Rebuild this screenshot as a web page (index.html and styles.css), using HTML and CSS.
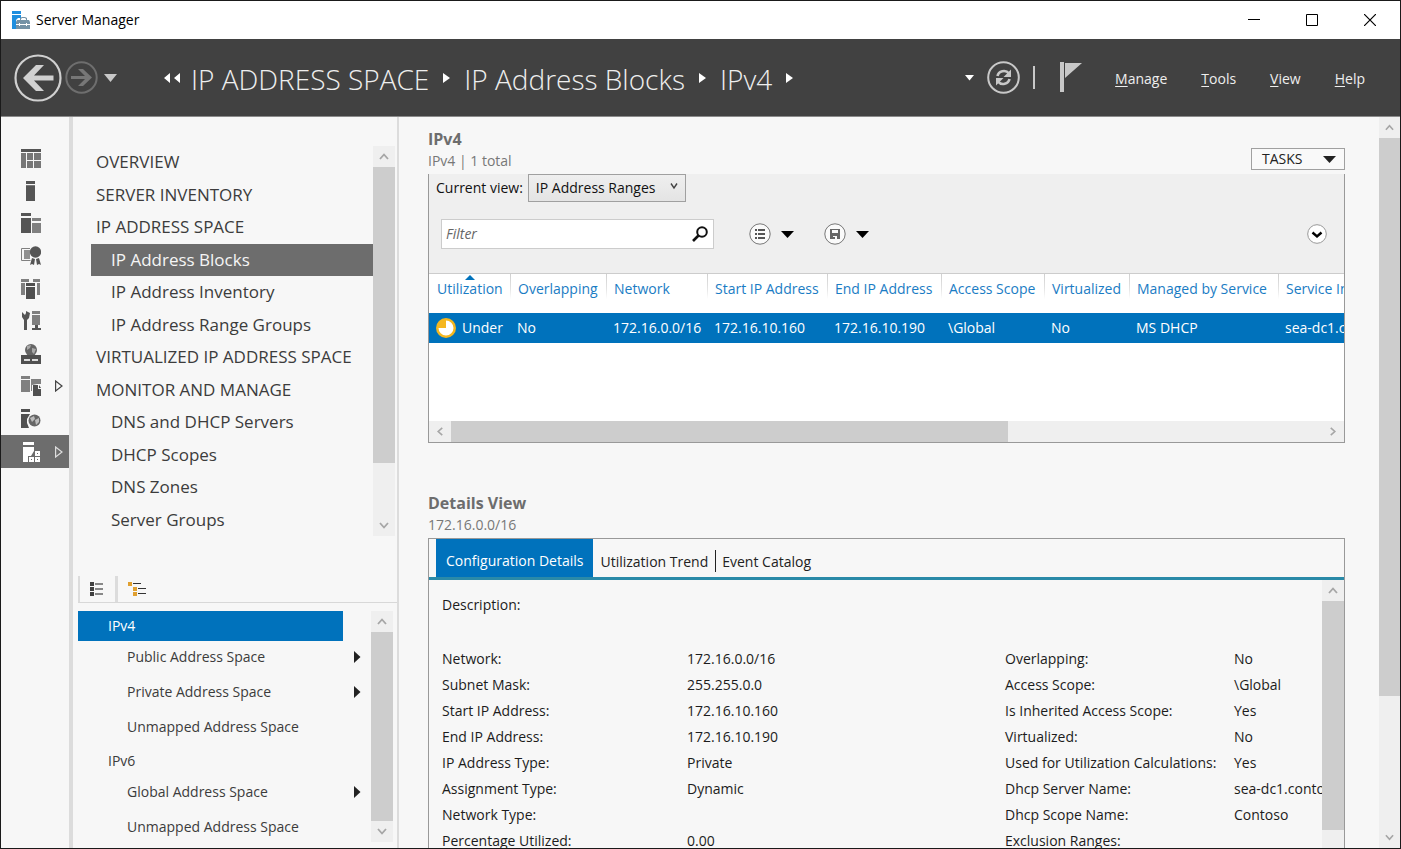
FILE: index.html
```html
<!DOCTYPE html>
<html lang="en">
<head>
<meta charset="utf-8">
<title>Server Manager</title>
<link rel="stylesheet" href="styles.css">
</head>
<body>
<div class="window">
  <header class="titlebar">
    <svg class="app-icon" width="18" height="18" viewBox="0 0 18 18" aria-hidden="true">
      <path fill="#1f8fdf" d="M0 0h9v3H0zM0 4h9v3H6L4 9v9H0z"/>
      <path fill="#7492a6" d="M4 11l1-2h3V7l2-1h3l2 1v2h2l1 2v2H4zM4 14h14v4H4z"/>
      <path fill="#fff" d="M9 8l1-1h3l1 1v1H9zM7 12h1v3H7zM14 12h1v3h-1z"/>
    </svg>
    <h1 class="app-title">Server Manager</h1>
    <div class="window-controls">
      <button class="window-button" aria-label="Minimize"><svg width="12" height="12" viewBox="0 0 12 12"><path d="M0 5.500h12" stroke="#000"/></svg></button>
      <button class="window-button" aria-label="Maximize"><svg width="12" height="12" viewBox="0 0 12 12"><path d="M.5.500h11v11H.5z" fill="none" stroke="#000"/></svg></button>
      <button class="window-button" aria-label="Close"><svg width="12" height="12" viewBox="0 0 12 12"><path d="M0 0l12 12M12 0L0 12" stroke="#000" stroke-width="1.200"/></svg></button>
    </div>
  </header>

  <div class="banner">
    <div class="history">
      <button class="plain" aria-label="Back"><svg width="48" height="48" viewBox="0 0 48 48"><circle cx="24" cy="24" r="22.500" fill="none" stroke="#d0d0d0" stroke-width="2.200"/><path fill="#d0d0d0" d="M9 24l13-13h8L20 21.500h19.500v5H20L30 37h-8z"/></svg></button>
      <button class="plain" aria-label="Forward"><svg width="33" height="33" viewBox="0 0 33 33"><circle cx="16.500" cy="16.500" r="15.200" fill="none" stroke="#6e6e6e" stroke-width="2"/><path fill="#777" d="M27 16.500L18 8h-5l7 7H6v3h14l-7 7h5z"/></svg></button>
      <button class="plain history-menu" aria-label="History"><svg width="13" height="8" viewBox="0 0 13 8"><path fill="#c8c8c8" d="M0 0h13L6.500 8z"/></svg></button>
    </div>
    <nav class="crumbs" aria-label="Breadcrumb">
      <svg width="17" height="10" viewBox="0 0 17 10"><path fill="#fff" d="M6 0v10L0 5zM16 0v10l-6-5z"/></svg>
      <a class="crumb" href="#">IP ADDRESS SPACE</a>
      <svg width="7" height="10" viewBox="0 0 7 10"><path fill="#fff" d="M0 0l7 5-7 5z"/></svg>
      <a class="crumb" href="#">IP Address Blocks</a>
      <svg width="7" height="10" viewBox="0 0 7 10"><path fill="#fff" d="M0 0l7 5-7 5z"/></svg>
      <a class="crumb" href="#">IPv4</a>
      <svg width="7" height="10" viewBox="0 0 7 10"><path fill="#fff" d="M0 0l7 5-7 5z"/></svg>
    </nav>
    <div class="banner-tools">
      <button class="plain" aria-label="More locations"><svg width="9" height="6" viewBox="0 0 9 6"><path fill="#fff" d="M0 0h9L4.500 5.500z"/></svg></button>
      <button class="plain" aria-label="Refresh"><svg width="33" height="33" viewBox="0 0 33 33"><circle cx="16.500" cy="16.500" r="15.300" fill="none" stroke="#c8c8c8" stroke-width="2"/><g fill="none" stroke="#c8c8c8" stroke-width="2.600"><path d="M10.500 15c1-5 8-7 11.500-2.500"/><path d="M22.500 18c-1 5-8 7-11.500 2.500"/></g><path fill="#c8c8c8" d="M24 8.500v7.500h-7.500zM9 24.500V17h7.500z"/></svg></button>
      <span class="banner-rule"></span>
      <button class="plain flag" aria-label="Notifications"><svg width="22" height="31" viewBox="0 0 22 31"><path fill="#c8c8c8" d="M0 0h4v30H0zM5 1h17L5 16z"/></svg></button>
    </div>
    <nav class="menus" aria-label="Main menu">
      <button class="menu"><u>M</u>anage</button>
      <button class="menu"><u>T</u>ools</button>
      <button class="menu"><u>V</u>iew</button>
      <button class="menu"><u>H</u>elp</button>
    </nav>
  </div>

  <div class="body">
    <nav class="rail" aria-label="Roles">
      <a class="rail-item" href="#" aria-label="Dashboard"><svg width="20" height="20" viewBox="0 0 20 20"><path fill="#555" d="M0 1h20v3H0z"/><path fill="#777" d="M0 5h5v15H0zM6 5h6v7H6zM13 5h7v7h-7zM6 13h6v7H6zM13 13h7v7h-7z"/></svg></a>
      <a class="rail-item" href="#" aria-label="Local Server"><svg width="20" height="20" viewBox="0 0 20 20"><path fill="#555" d="M5 0h9v3H5zM5 5h9v15H5z"/><path fill="#777" d="M5 4h9v1H5z"/></svg></a>
      <a class="rail-item" href="#" aria-label="All Servers"><svg width="20" height="20" viewBox="0 0 20 20"><path fill="#555" d="M0 0h10v3H0zM0 5h10v15H0z"/><path fill="#808080" d="M11 5h9v3h-9zM11 10h9v10h-9z"/></svg></a>
      <a class="rail-item" href="#" aria-label="Certificate Services"><svg width="20" height="20" viewBox="0 0 20 20"><path fill="none" stroke="#808080" d="M9 2.500H.5v12h9"/><path fill="#909090" d="M3 4h6v9H3z"/><circle cx="14.500" cy="6" r="5.700" fill="#555"/><path fill="#555" d="M11 12l3 1-1 6-2-1-2 1zM18 12l-3 1 1 6 2-1 2 1z"/></svg></a>
      <a class="rail-item" href="#" aria-label="Server Group"><svg width="20" height="20" viewBox="0 0 20 20"><path fill="#808080" d="M0 0h8v3H0zM0 4h4v12H0zM12 0h7v3h-7zM16 4h3v12h-3z"/><path fill="#505050" d="M5 4h9v3H5zM5 8h9v12H5z"/></svg></a>
      <a class="rail-item" href="#" aria-label="DHCP Tools"><svg width="20" height="20" viewBox="0 0 20 20"><path fill="#555" d="M1 1l3 3 1-2V0l4 2-1 5-2 2v10H3V9L1 6zM11 17h9v2h-9zM14 14h3v4h-3z"/><path fill="#808080" d="M11 0h8v3h-8zM11 4h8v10h-8z"/></svg></a>
      <a class="rail-item" href="#" aria-label="DNS"><svg width="20" height="20" viewBox="0 0 20 20"><circle cx="10" cy="6" r="6" fill="#666"/><path fill="#aaa" d="M6 2l4-1-1 3-3 2zM11 4l4 1-2 5-2-2z"/><path fill="#505050" d="M0 11h20v9H0z"/><path fill="#ddd" d="M3 15h6v2H3zM11 15h6v2h-6z"/></svg></a>
      <a class="rail-item" href="#" aria-label="File Services"><svg width="20" height="20" viewBox="0 0 20 20"><path fill="#808080" d="M0 0h9v3H0zM0 4h9v12H0zM10 3h10v5h-4l-5 1v6h-1z"/><path fill="#505050" d="M12 9h5v4h3v7h-8zM18 9l2 3h-2z"/></svg><svg class="rail-more" width="8" height="12" viewBox="0 0 8 12"><path fill="none" stroke="#444" stroke-width="1.200" d="M.6 1l6.400 5-6.400 5z"/></svg></a>
      <a class="rail-item" href="#" aria-label="Web Services"><svg width="20" height="20" viewBox="0 0 20 20"><path fill="#505050" d="M0 0h9v3H0zM0 5h9L6 10v4l2 5H0z"/><circle cx="13.500" cy="11.500" r="6" fill="#666"/><path fill="#bbb" d="M9 9l4-2 1 3-3 3zM14 11l4-2v4l-3 3z"/></svg></a>
      <a class="rail-item rail-current" href="#" aria-label="IPAM" aria-current="page"><svg width="20" height="20" viewBox="0 0 20 20"><path fill="#fff" d="M2 0h11v3H2zM2 5h11v4l-3 5H7v6H2zM14 9h5v5h-5zM8 15h5v5H8zM14 15h5v5h-5z"/><path fill="#6d6d6d" d="M16 11h1v1h-1zM10 17h1v1h-1zM16 17h1v1h-1z"/></svg><svg class="rail-more" width="8" height="12" viewBox="0 0 8 12"><path fill="none" stroke="#ddd" stroke-width="1.200" d="M.6 1l6.400 5-6.400 5z"/></svg></a>
    </nav>

    <aside class="sidebar">
      <div class="pane">
        <nav class="sections" aria-label="IPAM">
          <a class="section" href="#">OVERVIEW</a>
          <a class="section" href="#">SERVER INVENTORY</a>
          <a class="section" href="#">IP ADDRESS SPACE</a>
          <a class="section sub current" href="#">IP Address Blocks</a>
          <a class="section sub" href="#">IP Address Inventory</a>
          <a class="section sub" href="#">IP Address Range Groups</a>
          <a class="section" href="#">VIRTUALIZED IP ADDRESS SPACE</a>
          <a class="section" href="#">MONITOR AND MANAGE</a>
          <a class="section sub" href="#">DNS and DHCP Servers</a>
          <a class="section sub" href="#">DHCP Scopes</a>
          <a class="section sub" href="#">DNS Zones</a>
          <a class="section sub" href="#">Server Groups</a>
        </nav>
        <div class="scrollbar">
          <svg class="arrow" width="10" height="8" viewBox="0 0 10 8"><path d="M1 6.500L5 2l4 4.500"/></svg>
          <div class="track"><div class="thumb nav-thumb"></div></div>
          <svg class="arrow" width="10" height="8" viewBox="0 0 10 8"><path d="M1 1.500L5 6l4-4.500"/></svg>
        </div>
      </div>
      <div class="view-tabs">
        <button class="view-tab view-tab-on" aria-label="List view"><svg width="14" height="15" viewBox="0 0 14 15"><path fill="#404040" d="M0 0h4v4H0zM0 5h4v4H0zM0 10h4v4H0z"/><path fill="#888" d="M5 1h8v2H5zM5 6h8v2H5zM5 11h8v2H5z"/></svg></button>
        <button class="view-tab" aria-label="Tree view"><svg width="19" height="15" viewBox="0 0 19 15"><path fill="#e0a030" d="M0 0h4v4H0zM5 5h4v4H5zM5 10h4v4H5z"/><path fill="#333" d="M5 1h8v1H5zM10 6h8v1h-8zM10 11h8v1h-8z"/></svg></button>
      </div>
      <div class="pane tree-pane">
        <div class="tree">
          <a class="tree-root tree-current" href="#">IPv4</a>
          <a class="tree-leaf" href="#">Public Address Space<svg width="7" height="12" viewBox="0 0 7 12"><path fill="#222" d="M0 0l6.500 6L0 12z"/></svg></a>
          <a class="tree-leaf" href="#">Private Address Space<svg width="7" height="12" viewBox="0 0 7 12"><path fill="#222" d="M0 0l6.500 6L0 12z"/></svg></a>
          <a class="tree-leaf" href="#">Unmapped Address Space</a>
          <a class="tree-root" href="#">IPv6</a>
          <a class="tree-leaf" href="#">Global Address Space<svg width="7" height="12" viewBox="0 0 7 12"><path fill="#222" d="M0 0l6.500 6L0 12z"/></svg></a>
          <a class="tree-leaf" href="#">Unmapped Address Space</a>
        </div>
        <div class="scrollbar">
          <svg class="arrow" width="10" height="8" viewBox="0 0 10 8"><path d="M1 6.500L5 2l4 4.500"/></svg>
          <div class="track"><div class="thumb"></div></div>
          <svg class="arrow" width="10" height="8" viewBox="0 0 10 8"><path d="M1 1.500L5 6l4-4.500"/></svg>
        </div>
      </div>
    </aside>

    <main class="content">
      <section class="block">
        <div class="block-head">
          <div>
            <h2 class="block-title">IPv4</h2>
            <p class="block-sub">IPv4 | 1 total</p>
          </div>
          <button class="tasks">TASKS<svg width="13" height="7" viewBox="0 0 13 7"><path fill="#222" d="M0 0h13L6.500 7z"/></svg></button>
        </div>
        <div class="panel grid-panel">
          <div class="view-row">
            <label for="view">Current view:</label>
            <div class="view-picker">
              <select id="view" class="view-select"><option>IP Address Ranges</option></select>
              <svg class="view-chevron" width="8" height="7" viewBox="0 0 8 7"><path fill="none" stroke="#444" stroke-width="1.400" d="M1 .500l3 4.500L7 .500"/></svg>
            </div>
          </div>
          <div class="filter-row">
            <div class="filter">
              <input class="filter-input" type="text" placeholder="Filter" aria-label="Filter">
              <svg width="17" height="17" viewBox="0 0 17 17"><circle cx="10" cy="6" r="4.800" fill="none" stroke="#111" stroke-width="2"/><path d="M6.500 9.500L1 15" stroke="#111" stroke-width="2.600"/></svg>
            </div>
            <button class="plain split" aria-label="Criteria"><svg width="22" height="22" viewBox="0 0 22 22"><circle cx="11" cy="11" r="10.200" fill="#fafafa" stroke="#777"/><path fill="#555" d="M6 6h2v2H6zM9 6h7v2H9zM6 10h2v2H6zM9 10h7v2H9zM6 14h2v2H6zM9 14h7v2H9z"/></svg><svg width="13" height="7" viewBox="0 0 13 7"><path d="M0 0h13L6.500 7z"/></svg></button>
            <button class="plain split" aria-label="Save query"><svg width="22" height="22" viewBox="0 0 22 22"><circle cx="11" cy="11" r="10.200" fill="#fafafa" stroke="#777"/><path fill="#666" d="M6 6h10v10H6z"/><path fill="#fafafa" d="M8 7h6v3H8zM9 13h4v3H9z"/><path fill="#666" d="M9 14h2v2H9z"/></svg><svg width="13" height="7" viewBox="0 0 13 7"><path d="M0 0h13L6.500 7z"/></svg></button>
            <button class="plain expand" aria-label="Expand filter"><svg width="20" height="20" viewBox="0 0 20 20"><circle cx="10" cy="10" r="9.300" fill="#fff" stroke="#999"/><path fill="none" stroke="#000" stroke-width="2.400" d="M5.500 8.500l4.500 4 4.500-4"/></svg></button>
          </div>
          <div class="table-wrap">
            <table class="ranges">
              <colgroup><col class="c1"><col class="c2"><col class="c3"><col class="c4"><col class="c5"><col class="c6"><col class="c7"><col class="c8"><col class="c9"></colgroup>
              <thead>
                <tr><th>Utilization<svg class="sort" width="10" height="5" viewBox="0 0 10 5"><path fill="#0072bc" d="M0 5l5-5 5 5z"/></svg></th><th>Overlapping</th><th>Network</th><th>Start IP Address</th><th>End IP Address</th><th>Access Scope</th><th>Virtualized</th><th>Managed by Service</th><th>Service Instance</th></tr>
              </thead>
              <tbody>
                <tr><td><span class="state"><svg width="20" height="20" viewBox="0 0 20 20"><circle cx="10" cy="10" r="10" fill="#f5b71f"/><path fill="#fff" d="M10 2.500A7.500 7.500 0 1 1 2.500 10H10z"/></svg>Under</span></td><td>No</td><td>172.16.0.0/16</td><td>172.16.10.160</td><td>172.16.10.190</td><td>\Global</td><td>No</td><td>MS DHCP</td><td>sea-dc1.contoso.com</td></tr>
              </tbody>
            </table>
          </div>
          <div class="scrollbar horizontal">
            <svg class="arrow" width="8" height="10" viewBox="0 0 8 10"><path d="M6.500 1L2 5l4.500 4"/></svg>
            <div class="track"><div class="thumb grid-thumb"></div></div>
            <svg class="arrow" width="8" height="10" viewBox="0 0 8 10"><path d="M1.500 1L6 5l-4.500 4"/></svg>
          </div>
        </div>
      </section>

      <section class="block details">
        <h2 class="block-title">Details View</h2>
        <p class="block-sub">172.16.0.0/16</p>
        <div class="panel details-panel">
          <div class="tabs">
            <button class="tab tab-on">Configuration Details</button>
            <button class="tab">Utilization Trend</button>
            <button class="tab tab-last">Event Catalog</button>
          </div>
          <div class="details-body">
            <div class="facts">
              <p class="description">Description:</p>
              <dl class="fact-list">
                <dt>Network:</dt><dd>172.16.0.0/16</dd><dt>Overlapping:</dt><dd>No</dd>
                <dt>Subnet Mask:</dt><dd>255.255.0.0</dd><dt>Access Scope:</dt><dd>\Global</dd>
                <dt>Start IP Address:</dt><dd>172.16.10.160</dd><dt>Is Inherited Access Scope:</dt><dd>Yes</dd>
                <dt>End IP Address:</dt><dd>172.16.10.190</dd><dt>Virtualized:</dt><dd>No</dd>
                <dt>IP Address Type:</dt><dd>Private</dd><dt>Used for Utilization Calculations:</dt><dd>Yes</dd>
                <dt>Assignment Type:</dt><dd>Dynamic</dd><dt>Dhcp Server Name:</dt><dd>sea-dc1.contoso.com</dd>
                <dt>Network Type:</dt><dd></dd><dt>Dhcp Scope Name:</dt><dd>Contoso</dd>
                <dt>Percentage Utilized:</dt><dd>0.00</dd><dt>Exclusion Ranges:</dt><dd></dd>
              </dl>
            </div>
            <div class="scrollbar">
              <svg class="arrow" width="10" height="8" viewBox="0 0 10 8"><path d="M1 6.500L5 2l4 4.500"/></svg>
              <div class="track"><div class="thumb details-thumb"></div></div>
            </div>
          </div>
        </div>
      </section>
    </main>
    <div class="scrollbar page-scroll">
      <svg class="arrow" width="10" height="8" viewBox="0 0 10 8"><path d="M1 6.500L5 2l4 4.500"/></svg>
      <div class="track"><div class="thumb page-thumb"></div></div>
      <svg class="arrow" width="10" height="8" viewBox="0 0 10 8"><path d="M1 1.500L5 6l4-4.500"/></svg>
    </div>
  </div>
</div>
</body>
</html>
```
FILE: styles.css
```css
* { box-sizing: border-box; }

body {
  margin: 0;
  font: 14px/20px "Open Sans", "Noto Sans", sans-serif;
  color: #222;
}

h1, h2, p, dl, dd { margin: 0; }
a { color: inherit; text-decoration: none; }
svg { display: block; flex: none; }
button, input, select { font: inherit; color: inherit; }

.plain {
  display: flex;
  align-items: center;
  padding: 0;
  border: 0;
  background: none;
}

.window {
  display: flex;
  flex-direction: column;
  height: 100vh;
  overflow: hidden;
  border: 1px solid #1a1a1a;
  background: #f7f7f7;
}

/* Title bar */
.titlebar {
  display: flex;
  flex: none;
  align-items: center;
  height: 38px;
  padding-left: 11px;
  gap: 6px;
  background: #fff;
}
.app-title { font-size: 14px; font-weight: 400; color: #000; }
.window-controls { display: flex; margin-left: auto; padding-right: 1px; }
.window-button {
  display: flex;
  align-items: center;
  justify-content: center;
  width: 58px;
  height: 38px;
  padding: 0;
  border: 0;
  background: none;
}

/* Banner */
.banner {
  display: flex;
  flex: none;
  align-items: center;
  height: 78px;
  padding: 0 35px 0 13px;
  border-bottom: 1px solid #8a8a8a;
  background: #414141;
  color: #eee;
}
.history { display: flex; align-items: center; gap: 3px; }
.history-menu { margin-left: 3px; }
.crumbs {
  display: flex;
  align-items: center;
  margin-left: 47px;
  gap: 14px;
}
.crumb {
  padding-top: 2px;
  font-size: 28px;
  line-height: 40px;
  font-weight: 300;
  white-space: nowrap;
}
.crumbs svg:first-child { margin-right: -4px; }
.banner-tools {
  display: flex;
  align-items: center;
  margin-left: auto;
  gap: 13px;
}
.banner-rule { width: 2px; height: 23px; background: #c8c8c8; }
.flag { margin-left: 12px; }
.menus { display: flex; margin-left: 33px; gap: 34px; }
.menu {
  padding: 2px 0 0;
  border: 0;
  background: none;
}
.menu u { text-underline-offset: 2px; }

.body { display: flex; flex: 1; min-height: 0; }

/* Role icons */
.rail {
  display: grid;
  flex: none;
  align-content: start;
  grid-template-rows: repeat(10, 1fr);
  width: 68px;
  height: 351px;
  padding-top: 25px;
}
.rail-item {
  display: flex;
  align-items: center;
  padding: 0 6px 0 20px;
}
.rail-more { margin-left: auto; }
.rail-current { background: #6d6d6d; }

/* Navigation */
.sidebar {
  display: flex;
  flex: none;
  flex-direction: column;
  width: 330px;
  padding-top: 29px;
  border-left: 4px solid #dcdcdc;
  border-right: 2px solid #dcdcdc;
}
.pane { display: flex; padding-right: 2px; }
.sections {
  display: grid;
  flex: 1;
  grid-auto-rows: 1fr;
  height: 390px;
  padding-left: 18px;
}
.section {
  display: flex;
  align-items: center;
  padding-left: 5px;
  font-size: 17px;
  color: #3c3c3c;
  white-space: nowrap;
}
.sub { padding-left: 20px; }
.current { background: #6d6d6d; color: #f5f5f5; }

.scrollbar {
  display: flex;
  flex: none;
  flex-direction: column;
  width: 22px;
  background: #efefef;
}
.scrollbar .arrow {
  width: 22px;
  height: 21px;
  padding: 6px;
}
.arrow path { fill: none; stroke: #a6a6a6; stroke-width: 1.800; }
.track { flex: 1; }
.thumb { height: 100%; background: #cdcdcd; }
.nav-thumb { height: 85%; }
.horizontal { flex-direction: row; width: auto; height: 21px; }

.view-tabs {
  display: flex;
  margin-top: 40px;
  margin-left: 5px;
  border-bottom: 1px solid #d8d8d8;
}
.view-tab {
  height: 26px;
  padding: 0 10px;
  border: 0;
  background: none;
}
.view-tab-on {
  padding: 0 11px 0 10px;
  margin-bottom: -1px;
  border-left: 2px solid #dcdcdc;
  border-right: 3px solid #dcdcdc;
  background: #f7f7f7;
}

.tree-pane { flex: 1; min-height: 0; padding: 8px 4px 6px 5px; }
.tree { flex: 1; color: #3c3c3c; overflow: hidden; }
.tree-root {
  display: block;
  margin-right: 28px;
  padding-left: 30px;
  line-height: 30px;
}
.tree-current { background: #0072bc; color: #fff; }
.tree-leaf {
  display: flex;
  align-items: center;
  justify-content: space-between;
  padding: 0 10px 4px 49px;
  line-height: 31px;
}

/* Content */
.content {
  flex: 1;
  min-width: 0;
  overflow: hidden;
  padding: 11px 34px 0 29px;
}
.block-head {
  display: flex;
  align-items: flex-end;
  justify-content: space-between;
}
.block-title {
  font-size: 16px;
  line-height: 22px;
  font-weight: 700;
  color: #6d6d6d;
}
.block-sub { line-height: 22px; padding-bottom: 2px; color: #777; }
.tasks {
  display: flex;
  align-items: center;
  justify-content: space-between;
  width: 94px;
  height: 22px;
  margin-bottom: 4px;
  padding: 0 8px 0 10px;
  border: 1px solid #a0a0a0;
  background: #f9f9f9;
}
.panel { border: 1px solid #999; }
.grid-panel { border-top: 0; background: #efefef; }

.view-row { display: flex; align-items: center; gap: 5px; padding-left: 7px; color: #111; }
.view-picker { position: relative; }
.view-select {
  appearance: none;
  display: block;
  width: 158px;
  height: 28px;
  padding: 0 24px 0 7px;
  border: 1px solid #a0a0a0;
  border-radius: 0;
  background: linear-gradient(#efefef, #e4e4e4);
}
.view-chevron { position: absolute; right: 8px; top: 9px; }

.filter-row { display: flex; align-items: center; padding: 17px 17px 24px 12px; }
.filter {
  display: flex;
  align-items: center;
  width: 273px;
  height: 30px;
  margin-right: 5px;
  padding-right: 4px;
  border: 1px solid #ccc;
  background: #fff;
}
.filter-input {
  flex: 1;
  min-width: 0;
  padding: 0 4px;
  border: 0;
  outline: 0;
  background: none;
}
.filter-input::placeholder { font-style: italic; color: #666; opacity: 1; }
.split { gap: 10px; margin-left: 30px; }
.expand { margin-left: auto; }

.table-wrap { height: 148px; overflow: hidden; border-top: 1px solid #ccc; background: #fff; }
.ranges {
  table-layout: fixed;
  width: 1001px;
  border-collapse: separate;
  border-spacing: 0;
  white-space: nowrap;
}
.c1 { width: 81px; }
.c2 { width: 96px; }
.c3 { width: 101px; }
.c4 { width: 120px; }
.c5 { width: 114px; }
.c6 { width: 103px; }
.c7 { width: 85px; }
.c8 { width: 149px; }
.c9 { width: 152px; }
.ranges th {
  position: relative;
  height: 39px;
  padding: 0 0 9px 8px;
  background: linear-gradient(#d0d0d0, #e4e4e4 60%, #fff) 0 0 / 1px 25px no-repeat;
  font-weight: 400;
  text-align: left;
  color: #1a7cc4;
}
.ranges th:first-child { background: none; }
.sort { position: absolute; left: 36px; top: 1px; }
.ranges td { height: 30px; padding: 0 0 0 7px; background: #0072bc; color: #fff; }
.state { display: flex; align-items: center; gap: 6px; }
.grid-thumb { width: 64%; }

.details { margin-top: 49px; }
.tabs {
  display: flex;
  height: 41px;
  padding-left: 7px;
  border-bottom: 3px solid #2a8aa8;
}
.tab {
  padding: 8px 7px 0;
  border: 0;
  background: none;
  color: #222;
}
.tab-on { padding: 6px 10px 0; background: #0072bc; color: #fff; }
.tab-last {
  background: linear-gradient(#222, #222) 0 11px / 1px 22px no-repeat;
}
.details-body { display: flex; height: 274px; }
.facts { flex: 1; min-width: 0; overflow: hidden; padding: 15px 0 0 13px; color: #1c1c1c; }
.description { padding-bottom: 31px; }
.fact-list {
  display: grid;
  grid-template-columns: 245px 318px 229px 160px;
  grid-auto-rows: 26px;
  line-height: 26px;
  white-space: nowrap;
}
.details-thumb { height: 229px; }
.page-scroll { width: 21px; }
.page-scroll .arrow { width: 21px; }
.page-thumb { height: 81%; }
```
